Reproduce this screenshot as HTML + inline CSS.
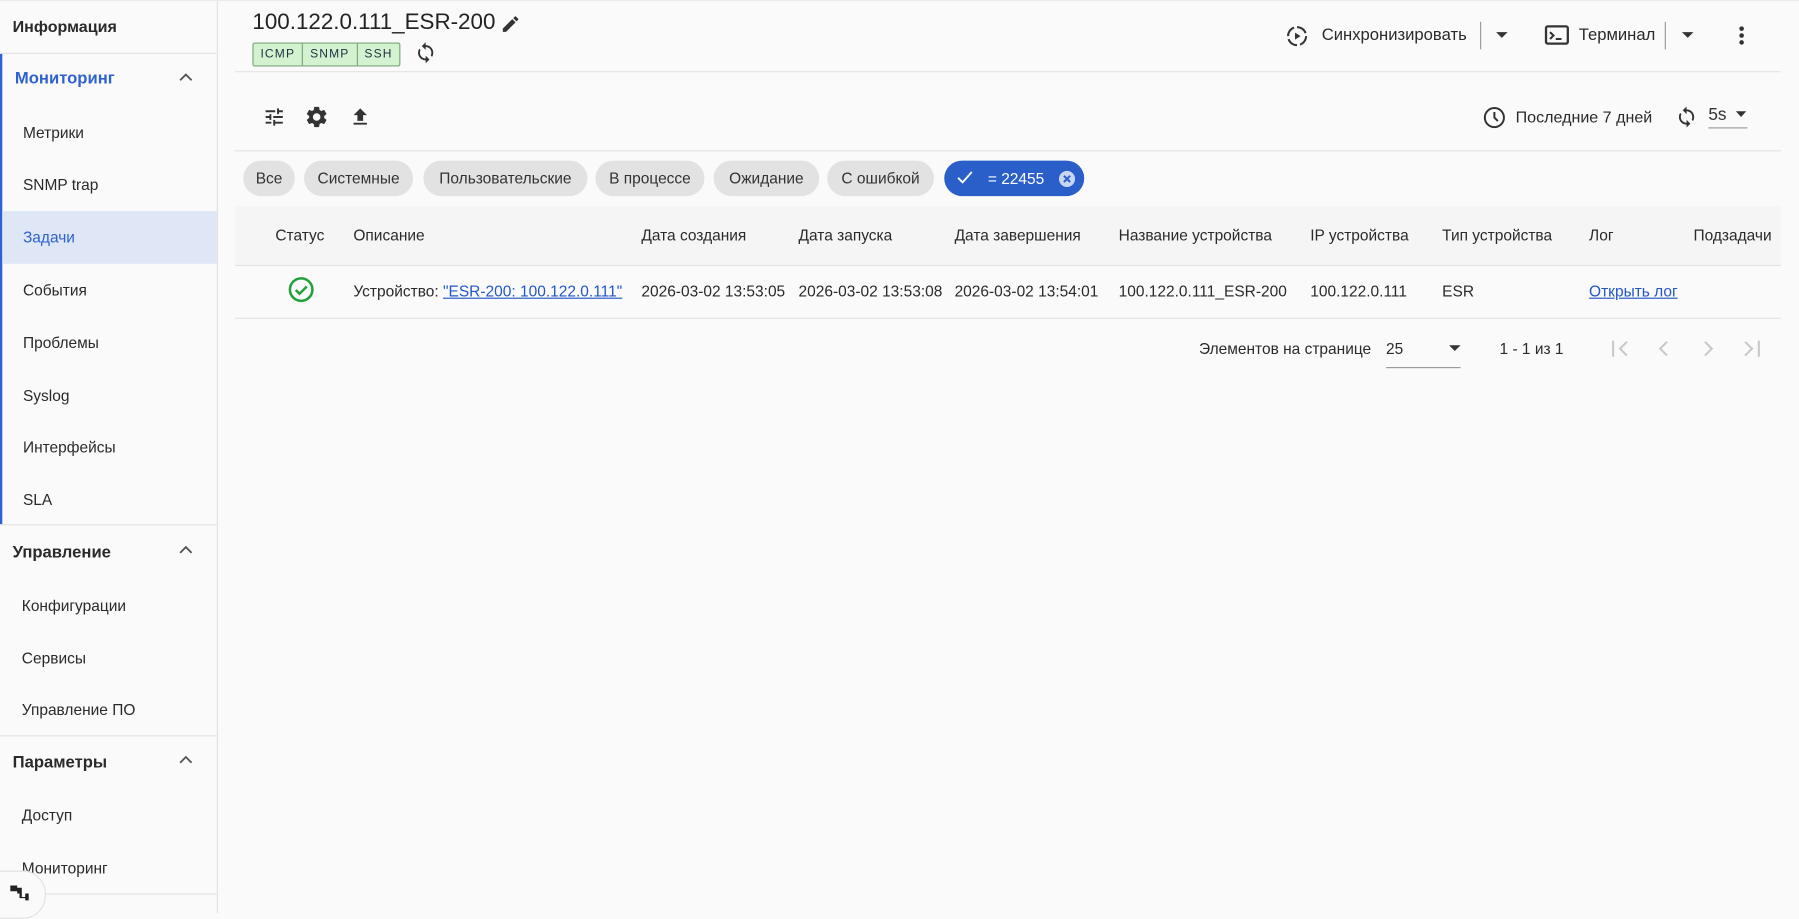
<!DOCTYPE html>
<html><head><meta charset="utf-8"><style>
html,body{margin:0;padding:0;width:1799px;height:913px;overflow:hidden;background:#fafafa}
#w{position:absolute;left:0;top:0;width:1568px;height:796px;transform:scale(1.14732,1.14698);transform-origin:0 0;font-family:"Liberation Sans",sans-serif;color:#2a2a2a;font-size:13.5px}
.a{position:absolute;white-space:nowrap}
.t{transform:translateY(-50%)}
.hl{position:absolute;height:1px;background:#e3e3e3}
.chip{position:absolute;top:140px;height:31px;border-radius:16px;background:#e2e2e2;line-height:31px;text-align:center;font-size:13.5px;color:#333}
.th{top:205px}
.td{top:254px}
svg{position:absolute}
</style></head><body><div id="w">
<!-- sidebar -->
<div class="a" style="left:0;top:0;width:189px;height:796px;border-right:1px solid #e2e2e2;background:#fafafa"></div>
<div class="hl" style="left:0;top:0;width:1568px;background:#ececec"></div>
<div class="a t" style="left:11px;top:23px;font-weight:bold;font-size:14px">Информация</div>
<div class="hl" style="left:0;top:46px;width:189px"></div>
<div class="a" style="left:0;top:47px;width:2px;height:410px;background:#2f62cf"></div>
<div class="a t" style="left:13px;top:69px;font-weight:bold;font-size:14.5px;color:#2f62cf">Мониторинг</div>
<svg style="left:155px;top:62px" width="14" height="10"><path d="M2 8 L7 3 L12 8" stroke="#555" stroke-width="1.6" fill="none"/></svg>
<div class="a" style="left:2px;top:184px;width:187px;height:46px;background:#dfe6f5"></div>
<div class="a t" style="left:20px;top:116px">Метрики</div>
<div class="a t" style="left:20px;top:161px">SNMP trap</div>
<div class="a t" style="left:20px;top:207px;color:#2f62cf">Задачи</div>
<div class="a t" style="left:20px;top:253px">События</div>
<div class="a t" style="left:20px;top:299px">Проблемы</div>
<div class="a t" style="left:20px;top:345px">Syslog</div>
<div class="a t" style="left:20px;top:390px">Интерфейсы</div>
<div class="a t" style="left:20px;top:436px">SLA</div>
<div class="hl" style="left:0;top:457px;width:189px"></div>
<div class="a t" style="left:11px;top:482px;font-weight:bold;font-size:14.5px">Управление</div>
<svg style="left:155px;top:474px" width="14" height="10"><path d="M2 8 L7 3 L12 8" stroke="#555" stroke-width="1.6" fill="none"/></svg>
<div class="a t" style="left:19px;top:528px">Конфигурации</div>
<div class="a t" style="left:19px;top:574px">Сервисы</div>
<div class="a t" style="left:19px;top:619px">Управление ПО</div>
<div class="hl" style="left:0;top:641px;width:189px"></div>
<div class="a t" style="left:11px;top:665px;font-weight:bold;font-size:14.5px">Параметры</div>
<svg style="left:155px;top:657px" width="14" height="10"><path d="M2 8 L7 3 L12 8" stroke="#555" stroke-width="1.6" fill="none"/></svg>
<div class="a t" style="left:19px;top:711px">Доступ</div>
<div class="a t" style="left:19px;top:757px">Мониторинг</div>
<div class="hl" style="left:0;top:779px;width:189px"></div>
<div class="a" style="left:-20px;top:759px;width:58px;height:40px;border-radius:20px;border:1px solid #e2e2e2;background:#fafafa"></div>
<svg style="left:8px;top:771px" width="18" height="16"><path d="M1 1h6v5H1zM8 3h3v8h3v-3h3v6h-3v-2h-5v-4H7V3z" fill="#222"/></svg>

<!-- header -->
<div class="a t" style="left:220px;top:20px;font-size:19.5px;font-weight:500;color:#222">100.122.0.111_ESR-200</div>
<svg style="left:436px;top:12px" width="18" height="18" viewBox="0 0 24 24"><path d="M3 17.25V21h3.75L17.81 9.94l-3.75-3.75L3 17.25zM20.71 7.04a1 1 0 000-1.41l-2.34-2.34a1 1 0 00-1.41 0l-1.83 1.83 3.75 3.75 1.83-1.83z" fill="#333"/></svg>
<div class="a" style="left:220px;top:37px;height:19px;border:1px solid #7aa57a;border-radius:2px;background:#d3f2d0;display:flex;font-size:10.5px;letter-spacing:1px;color:#234">
<span style="padding:0 6px;line-height:19px;border-right:1px solid #7aa57a">ICMP</span><span style="padding:0 6px;line-height:19px;border-right:1px solid #7aa57a">SNMP</span><span style="padding:0 6px;line-height:19px">SSH</span></div>
<svg style="left:361px;top:36px" width="20" height="20" viewBox="0 0 24 24"><path d="M12 4V1L8 5l4 4V6c3.31 0 6 2.69 6 6 0 1.01-.25 1.97-.7 2.8l1.46 1.46A7.93 7.93 0 0020 12c0-4.42-3.58-8-8-8zm0 14c-3.31 0-6-2.69-6-6 0-1.01.25-1.97.7-2.8L5.24 7.74A7.93 7.93 0 004 12c0 4.42 3.58 8 8 8v3l4-4-4-4v3z" fill="#333"/></svg>
<svg style="left:1120px;top:21px" width="21" height="21" viewBox="0 0 24 24"><path d="M12 3a9 9 0 018.5 6M21 12a9 9 0 01-6 8.5M12 21a9 9 0 01-8.5-6M3 12a9 9 0 016-8.5" stroke="#333" stroke-width="2" fill="none"/><path d="M10 8.5v7l5.5-3.5z" fill="#333"/></svg>
<div class="a t" style="left:1152px;top:31px;font-size:14.5px;font-weight:500">Синхронизировать</div>
<div class="a" style="left:1290px;top:19px;width:1px;height:24px;background:#999"></div>
<svg style="left:1303px;top:27px" width="12" height="8"><path d="M1 1h10L6 6z" fill="#333"/></svg>
<svg style="left:1346px;top:21px" width="22" height="20" viewBox="0 0 22 20"><rect x="1.5" y="2" width="19" height="15" rx="1.5" fill="none" stroke="#333" stroke-width="2"/><path d="M5 7l3 3-3 3M10 13h5" stroke="#333" stroke-width="1.8" fill="none"/></svg>
<div class="a t" style="left:1376px;top:31px;font-size:14.5px;font-weight:500">Терминал</div>
<div class="a" style="left:1451px;top:19px;width:1px;height:24px;background:#999"></div>
<svg style="left:1465px;top:27px" width="12" height="8"><path d="M1 1h10L6 6z" fill="#333"/></svg>
<svg style="left:1514px;top:22px" width="8" height="18"><circle cx="4" cy="3" r="2" fill="#333"/><circle cx="4" cy="9" r="2" fill="#333"/><circle cx="4" cy="15" r="2" fill="#333"/></svg>
<div class="hl" style="left:205px;top:62px;width:1347px"></div>

<!-- toolbar -->
<svg style="left:229px;top:92px" width="20" height="20" viewBox="0 0 24 24"><path d="M3 17v2h6v-2H3zM3 5v2h10V5H3zm10 16v-2h8v-2h-8v-2h-2v6h2zM7 9v2H3v2h4v2h2V9H7zm14 4v-2H11v2h10zm-6-4h2V7h4V5h-4V3h-2v6z" fill="#333"/></svg>
<svg style="left:265px;top:91px" width="22" height="22" viewBox="0 0 24 24"><path d="M19.14 12.94c.04-.3.06-.61.06-.94 0-.32-.02-.64-.07-.94l2.03-1.58a.49.49 0 00.12-.61l-1.92-3.32a.49.49 0 00-.59-.22l-2.39.96c-.5-.38-1.03-.7-1.62-.94l-.36-2.54a.48.48 0 00-.48-.41h-3.84c-.24 0-.43.17-.47.41l-.36 2.54c-.59.24-1.13.57-1.62.94l-2.39-.96a.48.48 0 00-.59.22L2.74 8.87c-.12.21-.08.47.12.61l2.03 1.58c-.05.3-.09.63-.09.94s.02.64.07.94l-2.03 1.58a.49.49 0 00-.12.61l1.92 3.32c.12.22.37.29.59.22l2.39-.96c.5.38 1.03.7 1.62.94l.36 2.54c.05.24.24.41.48.41h3.84c.24 0 .44-.17.47-.41l.36-2.54c.59-.24 1.13-.56 1.62-.94l2.39.96c.22.08.47 0 .59-.22l1.92-3.32c.12-.22.07-.47-.12-.61l-2.01-1.58zM12 15.6A3.6 3.6 0 1112 8.4a3.6 3.6 0 010 7.2z" fill="#333"/></svg>
<svg style="left:304px;top:92px" width="20" height="20" viewBox="0 0 24 24"><path d="M9 16h6v-6h4l-7-7-7 7h4zm-4 2h14v2H5z" fill="#333"/></svg>
<svg style="left:1292px;top:92px" width="21" height="21" viewBox="0 0 24 24"><circle cx="12" cy="12" r="9.5" fill="none" stroke="#333" stroke-width="2"/><path d="M12 6.5V12l3.5 3.5" stroke="#333" stroke-width="2" fill="none"/></svg>
<div class="a t" style="left:1321px;top:102px;font-size:14px;font-weight:500">Последние 7 дней</div>
<svg style="left:1460px;top:92px" width="20" height="20" viewBox="0 0 24 24"><path d="M12 4V1L8 5l4 4V6c3.31 0 6 2.69 6 6 0 1.01-.25 1.97-.7 2.8l1.46 1.46A7.93 7.93 0 0020 12c0-4.42-3.58-8-8-8zm0 14c-3.31 0-6-2.69-6-6 0-1.01.25-1.97.7-2.8L5.24 7.74A7.93 7.93 0 004 12c0 4.42 3.58 8 8 8v3l4-4-4-4v3z" fill="#333"/></svg>
<div class="a t" style="left:1489px;top:100px;font-size:15px;color:#333">5s</div>
<svg style="left:1512px;top:96px" width="11" height="7"><path d="M1 1h9L5.5 6z" fill="#333"/></svg>
<div class="a" style="left:1489px;top:111px;width:34px;height:1px;background:#999"></div>
<div class="hl" style="left:205px;top:131px;width:1347px"></div>

<!-- chips -->
<div class="chip" style="left:212px;width:45px">Все</div>
<div class="chip" style="left:265px;width:95px">Системные</div>
<div class="chip" style="left:369px;width:143px">Пользовательские</div>
<div class="chip" style="left:519px;width:95px">В процессе</div>
<div class="chip" style="left:622px;width:92px">Ожидание</div>
<div class="chip" style="left:721px;width:93px">С ошибкой</div>
<div class="chip" style="left:823px;width:122px;background:#2a5fc9;color:#fff"></div>
<svg style="left:833px;top:148px" width="16" height="14"><path d="M2 7l4 4 8-9" stroke="#fff" stroke-width="1.6" fill="none"/></svg>
<div class="a t" style="left:861px;top:156px;color:#fff">= 22455</div>
<svg style="left:922px;top:148px" width="16" height="16"><circle cx="8" cy="8" r="7" fill="#c8d6f2"/><path d="M5.3 5.3l5.4 5.4M10.7 5.3l-5.4 5.4" stroke="#2a5fc9" stroke-width="1.8"/></svg>

<!-- table -->
<div class="a" style="left:205px;top:180px;width:1347px;height:51px;background:#f5f5f5"></div>
<div class="hl" style="left:205px;top:231px;width:1347px"></div>
<div class="hl" style="left:205px;top:277px;width:1347px"></div>
<div class="a t th" style="left:240px">Статус</div>
<div class="a t th" style="left:308px">Описание</div>
<div class="a t th" style="left:559px">Дата создания</div>
<div class="a t th" style="left:696px">Дата запуска</div>
<div class="a t th" style="left:832px">Дата завершения</div>
<div class="a t th" style="left:975px">Название устройства</div>
<div class="a t th" style="left:1142px">IP устройства</div>
<div class="a t th" style="left:1257px">Тип устройства</div>
<div class="a t th" style="left:1385px">Лог</div>
<div class="a t th" style="left:1476px">Подзадачи</div>
<svg style="left:251px;top:241px" width="23" height="23"><circle cx="11.5" cy="11.5" r="9.8" fill="none" stroke="#22a03a" stroke-width="2.2"/><path d="M6.8 11.8l3.3 3.3 6.3-6.3" stroke="#22a03a" stroke-width="2.2" fill="none"/></svg>
<div class="a t td" style="left:308px">Устройство: <span style="color:#2456c8;text-decoration:underline">"ESR-200: 100.122.0.111"</span></div>
<div class="a t td" style="left:559px">2026-03-02 13:53:05</div>
<div class="a t td" style="left:696px">2026-03-02 13:53:08</div>
<div class="a t td" style="left:832px">2026-03-02 13:54:01</div>
<div class="a t td" style="left:975px">100.122.0.111_ESR-200</div>
<div class="a t td" style="left:1142px">100.122.0.111</div>
<div class="a t td" style="left:1257px">ESR</div>
<div class="a t td" style="left:1385px;color:#2456c8;text-decoration:underline">Открыть лог</div>

<!-- pagination -->
<div class="a t" style="left:1045px;top:304px">Элементов на странице</div>
<div class="a t" style="left:1208px;top:304px">25</div>
<svg style="left:1262px;top:300px" width="12" height="8"><path d="M1 1h10L6 6z" fill="#333"/></svg>
<div class="a" style="left:1208px;top:320px;width:65px;height:1px;background:#999"></div>
<div class="a t" style="left:1307px;top:304px">1 - 1 из 1</div>
<svg style="left:1403px;top:295px" width="140" height="18"><g stroke="#c8c8c8" stroke-width="1.8" fill="none"><path d="M3 2v14M15 3l-6 6 6 6"/><path d="M50 3l-6 6 6 6"/><path d="M83 3l6 6-6 6"/><path d="M118 3l6 6-6 6M130 2v14"/></g></svg>
</div></body></html>
